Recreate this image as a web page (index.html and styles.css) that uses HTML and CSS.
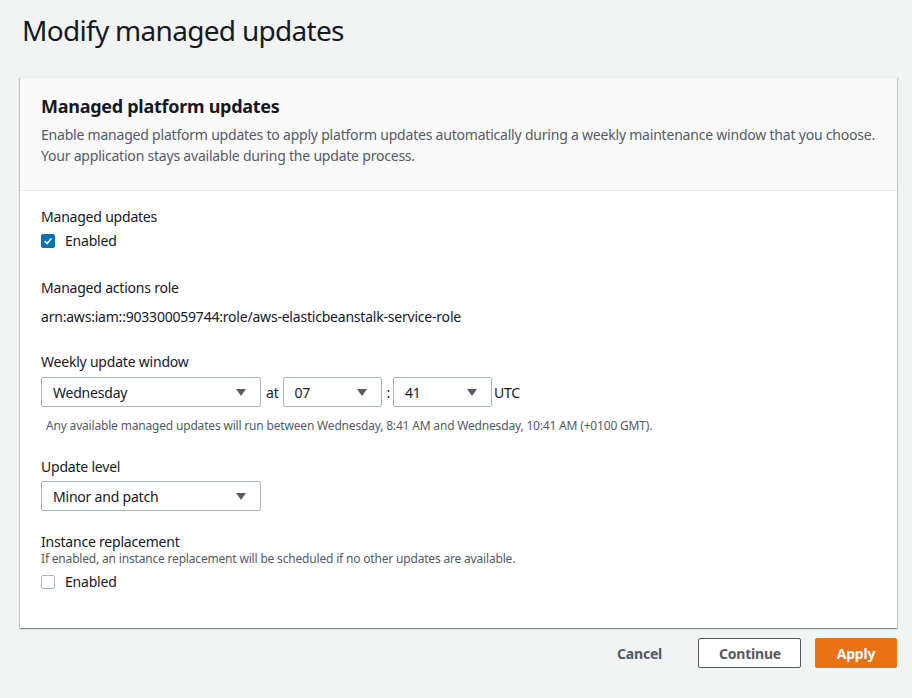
FILE: index.html
```html
<!DOCTYPE html>
<html>
<head>
<meta charset="utf-8">
<link rel="stylesheet" href="styles.css">
</head>
<body>
<div class="page">
  <h1 class="title">Modify managed updates</h1>
  <div class="card">
    <div class="card-header">
      <h2 class="card-title">Managed platform updates</h2>
      <p class="card-desc">Enable managed platform updates to apply platform updates automatically during a weekly maintenance window that you choose. Your application stays available during the update process.</p>
    </div>
    <div class="card-body">
      <div class="field f-managed">
        <div class="label">Managed updates</div>
        <label class="check">
          <span class="box checked"><svg width="14" height="14" viewBox="0 0 14 14"><path d="M3 7.2 L6 10 L11 4" fill="none" stroke="#fff" stroke-width="2"/></svg></span>
          <span>Enabled</span>
        </label>
      </div>
      <div class="field f-role">
        <div class="label">Managed actions role</div>
        <div class="value">arn:aws:iam::903300059744:role/aws-elasticbeanstalk-service-role</div>
      </div>
      <div class="field f-window">
        <div class="label">Weekly update window</div>
        <div class="row">
          <div class="select w-day"><span>Wednesday</span><i class="caret"></i></div>
          <span class="sep">at</span>
          <div class="select w-num"><span>07</span><i class="caret"></i></div>
          <span class="sep colon">:</span>
          <div class="select w-num"><span>41</span><i class="caret"></i></div>
          <span class="sep utc">UTC</span>
        </div>
        <div class="hint">Any available managed updates will run between Wednesday, 8:41 AM and Wednesday, 10:41 AM (+0100 GMT).</div>
      </div>
      <div class="field f-level">
        <div class="label">Update level</div>
        <div class="select w-day"><span>Minor and patch</span><i class="caret"></i></div>
      </div>
      <div class="field f-inst">
        <div class="label">Instance replacement</div>
        <div class="desc">If enabled, an instance replacement will be scheduled if no other updates are available.</div>
        <label class="check">
          <span class="box"></span>
          <span>Enabled</span>
        </label>
      </div>
    </div>
  </div>
  <div class="actions">
    <button class="btn btn-link">Cancel</button>
    <button class="btn btn-normal">Continue</button>
    <button class="btn btn-primary">Apply</button>
  </div>
</div>
</body>
</html>
```

FILE: styles.css
```css
* { box-sizing: border-box; letter-spacing: -0.015em; }
html, body { margin: 0; padding: 0; }
body {
  background: #f2f3f3;
  font-family: "Noto Sans", "Open Sans", Arial, sans-serif;
  color: #16191f;
  font-size: 14px;
}
.page {
  padding: 10px 15px 0 20px;
}
.title {
  margin: 0 0 0 2px;
  font-size: 28px;
  font-weight: 400;
  line-height: 40px;
  color: #16191f;
  letter-spacing: -0.025em;
}
.card {
  margin-top: 27px;
  background: #fff;
  box-shadow: 0 1px 1px 0 rgba(0,28,36,.3), 1px 1px 1px 0 rgba(0,28,36,.15), -1px 1px 1px 0 rgba(0,28,36,.15);
  border-top: 1px solid #eaeded;
}
.card-header {
  background: #fafafa;
  border-bottom: 1px solid #eaeded;
  padding: 15px 20px 24px 21px;
}
.card-title {
  margin: 0;
  font-size: 18px;
  font-weight: 700;
  line-height: 26px;
}
.card-desc {
  margin: 5px 0 0;
  color: #545b64;
  line-height: 21px;
}
.card-body {
  padding: 16px 20px 36px 21px;
}
.label {
  line-height: 20px;
}
.check {
  display: flex;
  align-items: center;
  gap: 10px;
  margin-top: 4px;
  line-height: 20px;
}
.box {
  width: 14px;
  height: 14px;
  border: 1px solid #aab7b8;
  border-radius: 2px;
  display: flex;
  align-items: center;
  justify-content: center;
  background: #fff;
}
.box.checked { background: #0073bb; border-color: #0073bb; }
.f-role { margin-top: 27px; }
.value { margin-top: 9px; line-height: 20px; }
.f-window { margin-top: 25px; }
.row {
  display: flex;
  align-items: center;
  margin-top: 5px;
}
.select {
  height: 30px;
  border: 1px solid #aab7b8;
  border-radius: 2px;
  background: #fff;
  display: flex;
  align-items: center;
  justify-content: space-between;
  padding: 0 14px 0 11px;
}
.w-day { width: 220px; }
.w-num { width: 99px; }
.caret {
  width: 0; height: 0;
  border-left: 5px solid transparent;
  border-right: 5px solid transparent;
  border-top: 7px solid #545b64;
}
.sep { padding: 0 4px 0 5px; }
.sep.colon { padding: 0 3px 0 5px; }
.sep.utc { padding: 0 0 0 2px; }
.hint {
  margin: 11px 0 0 5px;
  font-size: 12px;
  color: #545b64;
  line-height: 16px;
}
.f-level { margin-top: 23px; }
.f-level .select { margin-top: 4px; }
.f-inst { margin-top: 21px; }
.desc { font-size: 12px; color: #545b64; line-height: 16px; margin-top: -1px; }
.f-inst .check { margin-top: 5px; }
.actions {
  display: flex;
  justify-content: flex-end;
  align-items: center;
  gap: 14px;
  margin-top: 10px;
}
.btn {
  font-family: inherit;
  font-size: 14px;
  font-weight: 700;
  height: 30px;
  border-radius: 2px;
  padding: 0 20px;
  cursor: pointer;
}
.btn-link { background: none; border: 1px solid transparent; color: #545b64; margin-right: 1px; }
.btn-normal { background: #fff; border: 1px solid #545b64; color: #545b64; width: 103px; }
.btn-primary { background: #ec7211; border: 1px solid #ec7211; color: #fff; width: 82px; }
```
